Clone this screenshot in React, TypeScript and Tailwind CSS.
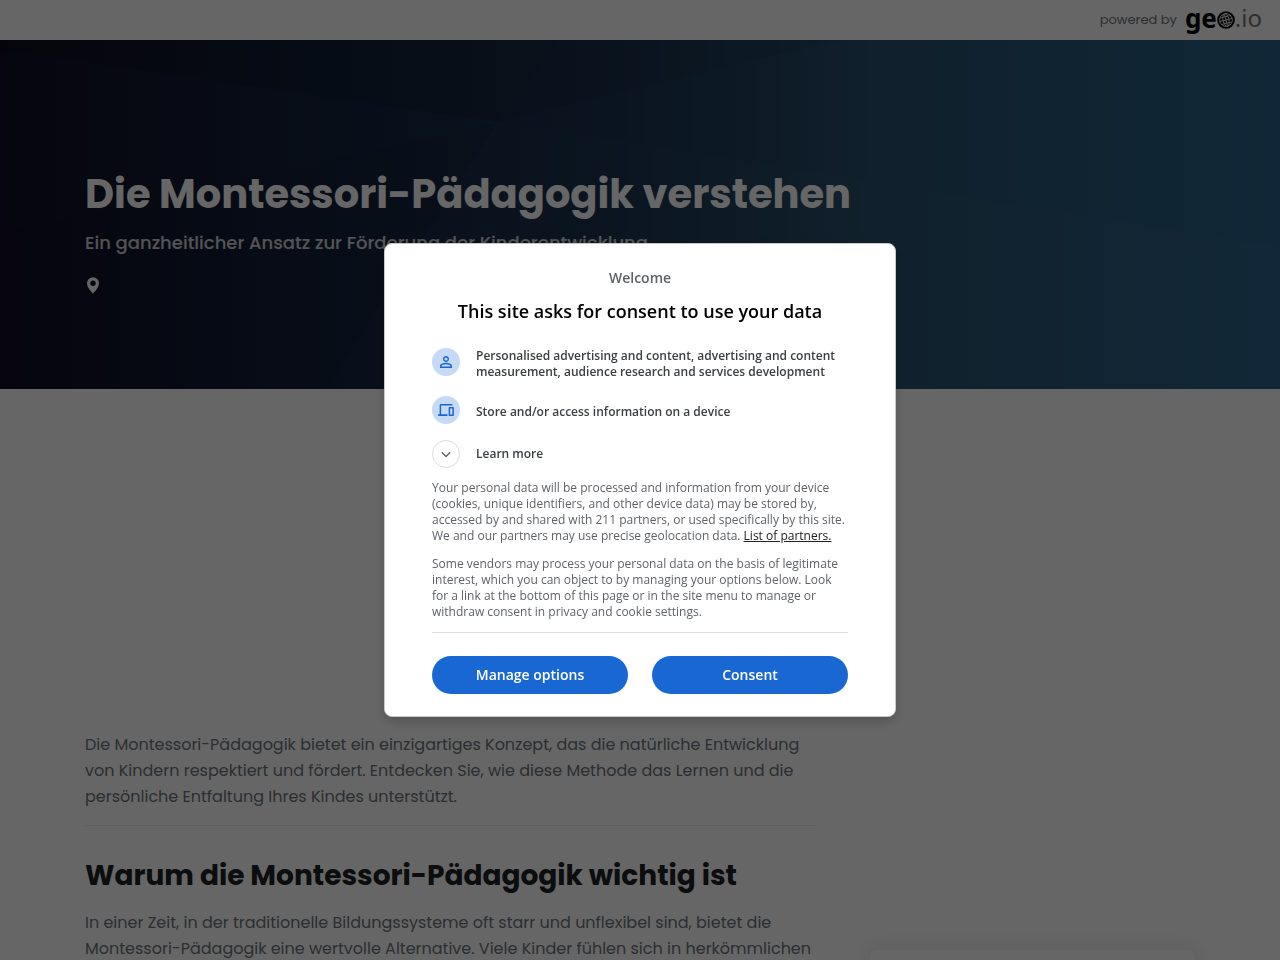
import type { ReactNode } from "react";

function Globe() {
  return (
    <svg viewBox="0 0 18 18" className="size-[18px]" aria-hidden="true">
      <circle cx="9" cy="9" r="8.8" fill="#000" />
      <g fill="none" stroke="#e8e8e8" strokeWidth="0.9" transform="rotate(-14 9 9)">
        <circle cx="9" cy="9" r="6.4" />
        <ellipse cx="9" cy="9" rx="3" ry="6.4" />
        <path d="M9 2.600v12.800M2.600 9h12.800M4 5.700h10M4 12.300h10" />
      </g>
    </svg>
  );
}

function PersonIcon() {
  return (
    <svg viewBox="0 0 24 24" className="size-[18px]" fill="#1967d2" aria-hidden="true">
      <path d="M12 5.9a2.1 2.1 0 1 1 0 4.2 2.1 2.1 0 0 1 0-4.2m0 9c2.97 0 6.1 1.46 6.1 2.1v1.1H5.9V17c0-.64 3.13-2.1 6.1-2.1M12 4C9.79 4 8 5.79 8 8s1.79 4 4 4 4-1.79 4-4-1.79-4-4-4zm0 9c-2.67 0-8 1.34-8 4v3h16v-3c0-2.66-5.33-4-8-4z" />
    </svg>
  );
}

function DevicesIcon() {
  return (
    <svg viewBox="0 0 24 24" className="size-[18px]" fill="#1967d2" aria-hidden="true">
      <path d="M5.500 6h15V4h-15c-1.100 0-2 .9-2 2v11.500h-2V20H14v-2.500H5.500V6zm16 2h-5c-.55 0-1 .45-1 1v10c0 .55.45 1 1 1h5c.55 0 1-.45 1-1V9c0-.55-.45-1-1-1zm-1 10h-3v-8h3v8z" />
    </svg>
  );
}

function Purpose({ icon, children }: { icon: ReactNode; children: ReactNode }) {
  return (
    <li className="flex min-h-8 items-center gap-4">
      <span className="flex size-7 shrink-0 items-center justify-center self-start rounded-full bg-[#c6daf7]">{icon}</span>
      <span>{children}</span>
    </li>
  );
}

function ConsentDialog() {
  return (
    <div className="fixed inset-0 flex items-center justify-center bg-black/60">
      <div
        role="dialog"
        aria-modal="true"
        aria-labelledby="consent-title"
        className="w-full max-w-[512px] rounded-lg border border-[#c8c8c8] bg-white px-[47px] pt-6 pb-[22px] font-['Open_Sans',sans-serif] shadow-[0_4px_12px_rgba(0,0,0,0.2)]"
      >
        <p className="text-center text-sm font-semibold text-[#5f6368]">Welcome</p>
        <h2 id="consent-title" className="mt-[11px] text-center text-lg leading-6 font-semibold text-black">
          This site asks for consent to use your data
        </h2>
        <ul className="mt-[25px] flex flex-col gap-4 text-xs leading-4 font-semibold text-[#3c4043]">
          <Purpose icon={<PersonIcon />}>
            Personalised advertising and content, advertising and content measurement, audience research and services
            development
          </Purpose>
          <Purpose icon={<DevicesIcon />}>Store and/or access information on a device</Purpose>
        </ul>
        <button type="button" className="mt-3 flex items-center gap-4 text-xs leading-4 font-semibold text-[#3c4043]">
          <span className="flex size-7 items-center justify-center rounded-full border border-[#dadce0]">
            <svg viewBox="0 0 12 12" className="size-3" fill="none" stroke="#5f6368" strokeWidth="1.4" aria-hidden="true">
              <path d="M1.800 4.200l4.200 4.200 4.200-4.200" />
            </svg>
          </span>
          <span>Learn more</span>
        </button>
        <div className="mt-3 flex flex-col gap-3 border-b border-[#dadce0] pb-3 text-xs leading-4 text-[#5f6368]">
          <p>
            Your personal data will be processed and information from your device (cookies, unique identifiers, and other
            device data) may be stored by, accessed by and shared with 211 partners, or used specifically by this site. We
            and our partners may use precise geolocation data.{" "}
            <a href="#partners" className="text-[#202124] underline">
              List of partners.
            </a>
          </p>
          <p>
            Some vendors may process your personal data on the basis of legitimate interest, which you can object to by
            managing your options below. Look for a link at the bottom of this page or in the site menu to manage or
            withdraw consent in privacy and cookie settings.
          </p>
        </div>
        <div className="mt-[23px] grid grid-cols-2 gap-6 text-sm font-semibold text-white">
          <button type="button" className="h-[38px] rounded-full bg-[#1967d2]">
            Manage options
          </button>
          <button type="button" className="h-[38px] rounded-full bg-[#1967d2]">
            Consent
          </button>
        </div>
      </div>
    </div>
  );
}

function Hero() {
  return (
    <section className="relative bg-[linear-gradient(90deg,#100e26_0%,#13203a_22%,#1a3350_48%,#28506e_68%,#2b628a_100%)] pt-[130px] pb-24">
      <svg viewBox="0 0 1280 349" preserveAspectRatio="none" className="absolute inset-0 size-full" aria-hidden="true">
        <path d="M0 10L498 82L559 0H0z" fill="#000" opacity=".1" />
        <path d="M559 0L498 82L840 0z" fill="#000" opacity=".06" />
        <path d="M0 193L498 82L326 349H0z" fill="#000" opacity=".03" />
        <path d="M498 82L1280 207V349H326z" fill="#fff" opacity=".012" />
      </svg>
      <div className="relative mx-auto max-w-[1140px] px-[15px]">
        <h1 className="text-[40px] leading-12 font-bold text-white">Die Montessori-Pädagogik verstehen</h1>
        <p className="mt-[11px] text-lg leading-7 font-medium text-white/80">
          Ein ganzheitlicher Ansatz zur Förderung der Kinderentwicklung
        </p>
        <svg viewBox="0 0 16 16" className="mt-5 size-4 overflow-visible" fill="#fff" aria-hidden="true">
          <path
            fillRule="evenodd"
            d="M8 16.500s6-5.500 6-10.300a6 6 0 1 0-12 0c0 4.800 6 10.300 6 10.300zm0-7.500a2.700 2.700 0 1 1 0-5.400 2.700 2.700 0 0 1 0 5.400z"
          />
        </svg>
      </div>
    </section>
  );
}

export default function App() {
  return (
    <div className="h-screen overflow-hidden bg-white font-[Poppins,Inter,sans-serif] text-[#6c757d]">
      <header className="flex h-10 items-center justify-end gap-2 px-[18px]">
        <span className="text-[13px]">powered by</span>
        <a href="#geo" aria-label="geo.io" className="flex items-center font-['Noto_Sans',sans-serif] text-[26px] leading-8">
          <span className="pb-1 font-bold text-black">ge</span>
          <Globe />
          <span className="pb-1 text-2xl leading-8 text-[#747579]">.io</span>
        </a>
      </header>
      <Hero />
      <div className="mx-auto flex max-w-[1140px] px-[15px] pt-[343px]">
        <main className="w-[731px] shrink-0">
          <p className="leading-[26px]">
            Die Montessori-Pädagogik bietet ein einzigartiges Konzept, das die natürliche Entwicklung von Kindern
            respektiert und fördert. Entdecken Sie, wie diese Methode das Lernen und die persönliche Entfaltung Ihres
            Kindes unterstützt.
          </p>
          <hr className="mt-[15px] border-[#e9eaec]" />
          <h2 className="mt-8 text-[28px] leading-9 font-bold text-[#202124]">Warum die Montessori-Pädagogik wichtig ist</h2>
          <p className="mt-4 leading-[26px]">
            In einer Zeit, in der traditionelle Bildungssysteme oft starr und unflexibel sind, bietet die
            Montessori-Pädagogik eine wertvolle Alternative. Viele Kinder fühlen sich in herkömmlichen
          </p>
        </main>
        <aside className="mt-[218px] ml-[54px] h-40 grow rounded-md bg-white shadow-[0_0_20px_rgba(29,58,83,0.15)]" />
      </div>
      <ConsentDialog />
    </div>
  );
}
